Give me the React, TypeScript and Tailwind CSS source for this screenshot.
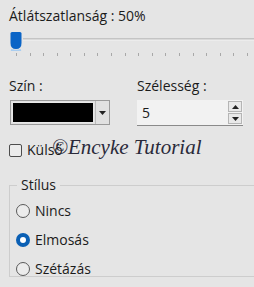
import React from "react";

const ticks = Array.from({ length: 18 }, (_, i) => i);

function Radio({ label, checked }: { label: string; checked?: boolean }) {
  return (
    <div className="flex items-center gap-[5px] h-[29px]">
      {checked ? (
        <span className="w-[14px] h-[14px] rounded-full bg-[#0a5fb4] flex items-center justify-center">
          <span className="w-[6px] h-[6px] rounded-full bg-white" />
        </span>
      ) : (
        <span className="w-[14px] h-[14px] rounded-full border border-[#5a5a5a] bg-[#ececec]" />
      )}
      <span>{label}</span>
    </div>
  );
}

export default function App() {
  return (
    <div className="relative w-[254px] h-[287px] overflow-hidden bg-[#e5e5e5] text-[14px] leading-[18px] text-[#1b1b1b] font-['Open_Sans',sans-serif]">
      <div className="pl-[9px] pt-[7px]">Átlátszatlanság : 50%</div>

      {/* slider */}
      <div className="mt-[7px] ml-[9px] flex items-start">
        <svg width="14" height="19" viewBox="0 0 14 19" className="shrink-0">
          <path d="M2 18 Q7 19.5 12 18" stroke="#a9cdf0" strokeWidth="2" fill="none" />
          <path d="M1.5 1.5 Q1.5 0 3 0 H11 Q12.5 0 12.5 1.5 V11 Q12.5 17 7 17 Q1.5 17 1.5 11 Z" fill="#0a64c6" />
        </svg>
        <div className="flex-1 mt-[6px] h-[3px] border-t border-[#c4c4c4] bg-[#d9d9d9] border-b border-b-[#ececec]" />
      </div>
      <div className="ml-[16px] w-[232px] mt-[2px] flex justify-between">
        {ticks.map((t) => (
          <span key={t} className="w-px h-[3px] bg-[#a8a8a8]" />
        ))}
      </div>

      {/* colour + width */}
      <div className="mt-[21px] flex">
        <div className="w-[128px] pl-[9px]">
          <div>Szín :</div>
          <div className="mt-[5px] ml-px w-[100px] h-[25px] border border-[#9a9a9a] flex bg-[#e1e1e1]">
            <div className="flex-1 m-px bg-black border border-[#e8e8e8]" />
            <div className="w-[14px] flex items-center justify-center border-l border-[#bcbcbc]">
              <svg width="7" height="4" viewBox="0 0 7 4">
                <path d="M0 0 H7 L3.5 4 Z" fill="#222" />
              </svg>
            </div>
          </div>
        </div>
        <div className="pl-[9px]">
          <div>Szélesség :</div>
          <div className="mt-[5px] w-[106px] h-[26px] border-b border-[#8a8a8a] flex bg-[#f2f2f2]">
            <div className="flex-1 pl-[5px] flex items-center">5</div>
            <div className="w-[15px] flex flex-col py-px pr-px gap-px">
              <div className="flex-1 border border-[#b5b5b5] bg-[#e9e9e9] flex items-center justify-center">
                <svg width="7" height="4" viewBox="0 0 7 4">
                  <path d="M0 4 H7 L3.5 0 Z" fill="#222" />
                </svg>
              </div>
              <div className="flex-1 border border-[#b5b5b5] bg-[#e9e9e9] flex items-center justify-center">
                <svg width="7" height="4" viewBox="0 0 7 4">
                  <path d="M0 0 H7 L3.5 4 Z" fill="#222" />
                </svg>
              </div>
            </div>
          </div>
        </div>
      </div>

      {/* checkbox */}
      <div className="mt-[15px] pl-[9px] flex items-center gap-[5px]">
        <span className="w-[13px] h-[13px] border border-[#4d4d4d] bg-[#ececec] rounded-[2px]" />
        <span>Külső</span>
      </div>

      {/* group box */}
      <div className="relative mt-[26px] ml-[9px] w-[260px] h-[92px] border border-[#cdcdcd] pl-[6px] pt-[10px]">
        <span className="absolute -top-[10px] left-[7px] px-[4px] bg-[#e5e5e5]">Stílus</span>
        <Radio label="Nincs" />
        <Radio label="Elmosás" checked />
        <Radio label="Szétázás" />
      </div>

      {/* watermark */}
      <div className="absolute left-[52px] top-[135px] text-[21px] leading-[24px] italic text-[#2a2a3a] font-['Liberation_Serif',serif]">
        ©Encyke Tutorial
      </div>
    </div>
  );
}
